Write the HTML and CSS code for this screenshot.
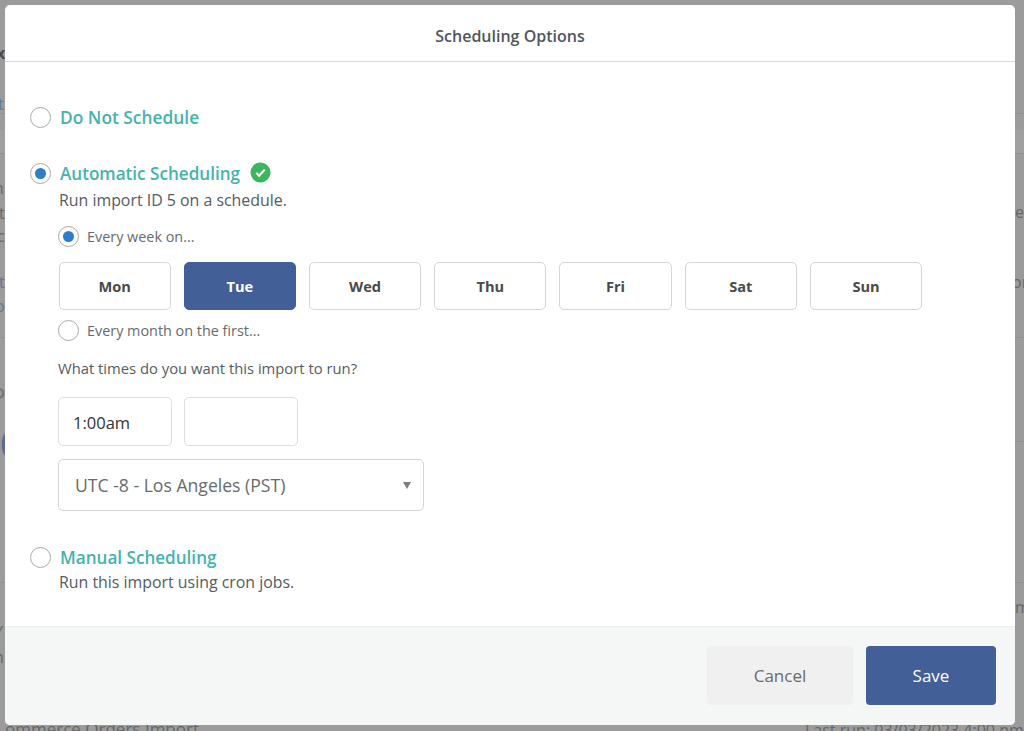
FILE: index.html
```html
<!DOCTYPE html>
<html lang="en">
<head>
<meta charset="utf-8">
<title>Scheduling Options</title>
<link rel="stylesheet" href="styles.css">
</head>
<body>
<div class="behind">
  <i class="band"></i>
  <i class="rule r0"></i><i class="rule r1"></i><i class="rule r2"></i><i class="rule r3"></i><i class="rule r4"></i>
  <span class="frag f1">x</span>
  <span class="frag link f2">t</span>
  <span class="frag f3">n</span>
  <span class="frag f4">t</span>
  <span class="frag f5">c</span>
  <span class="frag link f6">t</span>
  <span class="frag link f7">o</span>
  <span class="frag big f8">P</span>
  <span class="frag huge f9">C</span>
  <span class="frag f10">Y</span>
  <span class="frag f11">n</span>
  <span class="frag f12">er</span>
  <span class="frag f13">or</span>
  <span class="frag f14">m</span>
  <span class="frag f15">ommerce Orders Import</span>
  <span class="frag f16">Last run: 03/03/2023 4:00 pm</span>
</div>
<main class="modal">
  <header class="modal-head">Scheduling Options</header>
  <section class="modal-body">
    <div class="option opt-none">
      <span class="radio big-radio"></span>
      <span class="opt-title">Do Not Schedule</span>
    </div>
    <div class="option opt-auto">
      <span class="radio big-radio on"></span>
      <span class="opt-title">Automatic Scheduling</span>
      <svg class="check" viewBox="0 0 22 22" width="21" height="21" aria-hidden="true">
        <circle cx="11" cy="11" r="10.5" fill="#3cb55f"/>
        <path d="M6.6 11.4l3 3 5.8-6.4" fill="none" stroke="#fff" stroke-width="2.3"/>
      </svg>
    </div>
    <p class="desc">Run import ID 5 on a schedule.</p>
    <div class="sub-option sub-week">
      <span class="radio on"></span>
      <span>Every week on...</span>
    </div>
    <div class="days">
      <button class="day">Mon</button>
      <button class="day active">Tue</button>
      <button class="day">Wed</button>
      <button class="day">Thu</button>
      <button class="day">Fri</button>
      <button class="day">Sat</button>
      <button class="day">Sun</button>
    </div>
    <div class="sub-option sub-month">
      <span class="radio"></span>
      <span>Every month on the first...</span>
    </div>
    <p class="times-label">What times do you want this import to run?</p>
    <div class="times">
      <div class="time">1:00am</div>
      <div class="time"></div>
    </div>
    <div class="select">
      <span>UTC -8 - Los Angeles (PST)</span>
      <span class="caret"></span>
    </div>
    <div class="option opt-manual">
      <span class="radio big-radio"></span>
      <span class="opt-title">Manual Scheduling</span>
    </div>
    <p class="desc">Run this import using cron jobs.</p>
  </section>
  <footer class="modal-foot">
    <button class="btn cancel">Cancel</button>
    <button class="btn save">Save</button>
  </footer>
</main>
</body>
</html>
```
FILE: styles.css
```css
* { box-sizing: border-box; }
html, body { margin: 0; height: 100%; }
body {
  width: 1024px;
  height: 731px;
  overflow: hidden;
  background: #9b9b9b;
  font-family: "Open Sans", sans-serif;
  color: #555c63;
  position: relative;
}
.behind { position: absolute; inset: 0; overflow: hidden; }
.frag { position: absolute; font-size: 16px; line-height: 20px; color: #666; white-space: nowrap; }
.link { color: #5d7a97; }
.big { font-size: 26px; line-height: 30px; color: #777; }
.huge { font-size: 46px; line-height: 50px; color: #5b6b92; font-weight: 700; }
.f1 { left: -4px; top: 43px; font-weight: 700; color: #4a4a4a; }
.f2 { left: -2px; top: 94px; }
.f3 { left: -6px; top: 178px; }
.f4 { left: -1px; top: 203px; }
.f5 { left: -3px; top: 226px; }
.f6 { left: -1px; top: 272px; }
.f7 { left: -5px; top: 296px; }
.f8 { left: -10px; top: 381px; }
.f9 { left: -1px; top: 418px; }
.f10 { left: -6px; top: 622px; }
.f11 { left: -6px; top: 647px; }
.f12 { left: 1015px; top: 202px; }
.f13 { left: 1012px; top: 272px; }
.f14 { left: 1015px; top: 597px; }
.f15 { left: 5px; top: 719px; font-size: 17px; }
.f16 { left: 805px; top: 720px; font-size: 16px; }
.band { position: absolute; left: 0; right: 0; top: 130px; height: 23px; background: #a0a0a0; }
.rule { position: absolute; left: 0; right: 0; height: 1px; background: #8f8f8f; }
.r0 { top: 113px; }
.r1 { top: 153px; }
.r2 { top: 337px; }
.r3 { top: 441px; }
.r4 { top: 582px; }

.modal {
  position: absolute;
  left: 5px;
  top: 5px;
  width: 1010px;
  height: 720px;
  background: #fff;
  border-radius: 5px;
  display: flex;
  flex-direction: column;
  overflow: hidden;
}
.modal-head {
  height: 57px;
  flex: none;
  border-bottom: 1px solid #d9d9d9;
  display: flex;
  align-items: center;
  justify-content: center;
  font-size: 16px;
  font-weight: 600;
  color: #50565c;
  padding-top: 6px;
}
.modal-body { flex: 1; padding: 0 25px; }
.option { display: flex; align-items: center; }
.opt-title { font-size: 17.1px; font-weight: 600; color: #45b3ad; line-height: 24px; margin: 1px 0 -1px 9px; }
.opt-none .opt-title { font-size: 17.35px; margin: 0 0 0 9px; }
.opt-none { margin-top: 43px; }
.opt-auto { margin-top: 32px; }
.opt-manual { margin-top: 34px; }
.radio {
  flex: none;
  width: 21px;
  height: 21px;
  border-radius: 50%;
  border: 1px solid #a8a8a8;
  background: #fff;
  display: inline-flex;
  align-items: center;
  justify-content: center;
}
.radio.on::after {
  content: "";
  width: 11px;
  height: 11px;
  border-radius: 50%;
  background: #2c7ec9;
}
.check { margin-left: 10px; margin-top: -2px; flex: none; }
.desc { margin: 0 0 0 29px; font-size: 15.9px; line-height: 20px; color: #555c63; }
.opt-auto + .desc { margin-top: 5px; }
.opt-manual + .desc { margin-top: 3px; }
.sub-option { display: flex; align-items: center; gap: 8px; margin-left: 28px; font-size: 14.4px; line-height: 20px; color: #666b70; }
.sub-week { margin-top: 16px; }
.sub-month { margin-top: 10px; }
.days { display: flex; gap: 13.05px; margin: 15px 0 0 28.5px; }
.day {
  width: 112.2px;
  height: 48px;
  padding: 0;
  border: 1px solid #d5d5d5;
  border-radius: 5px;
  background: #fff;
  font: 700 14.6px "Open Sans", sans-serif;
  color: #4a4a4a;
}
.day.active { background: #425f97; border-color: #425f97; color: #fff; }
.times-label { margin: 17px 0 0 28px; font-size: 14.8px; line-height: 20px; color: #555c63; }
.times { display: flex; gap: 12px; margin: 19px 0 0 28px; }
.time {
  width: 114px;
  height: 49px;
  border: 1px solid #dedede;
  border-radius: 5px;
  padding-left: 14px;
  font-size: 16.5px;
  line-height: 49px;
  color: #333;
}
.select {
  width: 366px;
  height: 52px;
  margin: 13px 0 0 28px;
  border: 1px solid #d5d5d5;
  border-radius: 5px;
  padding: 0 12px 0 16px;
  display: flex;
  align-items: center;
  justify-content: space-between;
  font-size: 17.6px;
  color: #666b70;
}
.caret {
  width: 0;
  height: 0;
  border-left: 4px solid transparent;
  border-right: 4px solid transparent;
  border-top: 7px solid #7d7d7d;
}
.modal-foot {
  height: 99px;
  flex: none;
  background: #f5f7f7;
  border-top: 1px solid #eeeeee;
  display: flex;
  justify-content: flex-end;
  gap: 13px;
  padding: 19px 19px 0 0;
}
.btn {
  height: 59px;
  border: 0;
  border-radius: 4px;
  font: 400 17px "Open Sans", sans-serif;
}
.cancel { width: 146px; background: #f0f0f0; color: #6a6a6a; }
.save { width: 130px; background: #425f97; color: #fff; }
```
